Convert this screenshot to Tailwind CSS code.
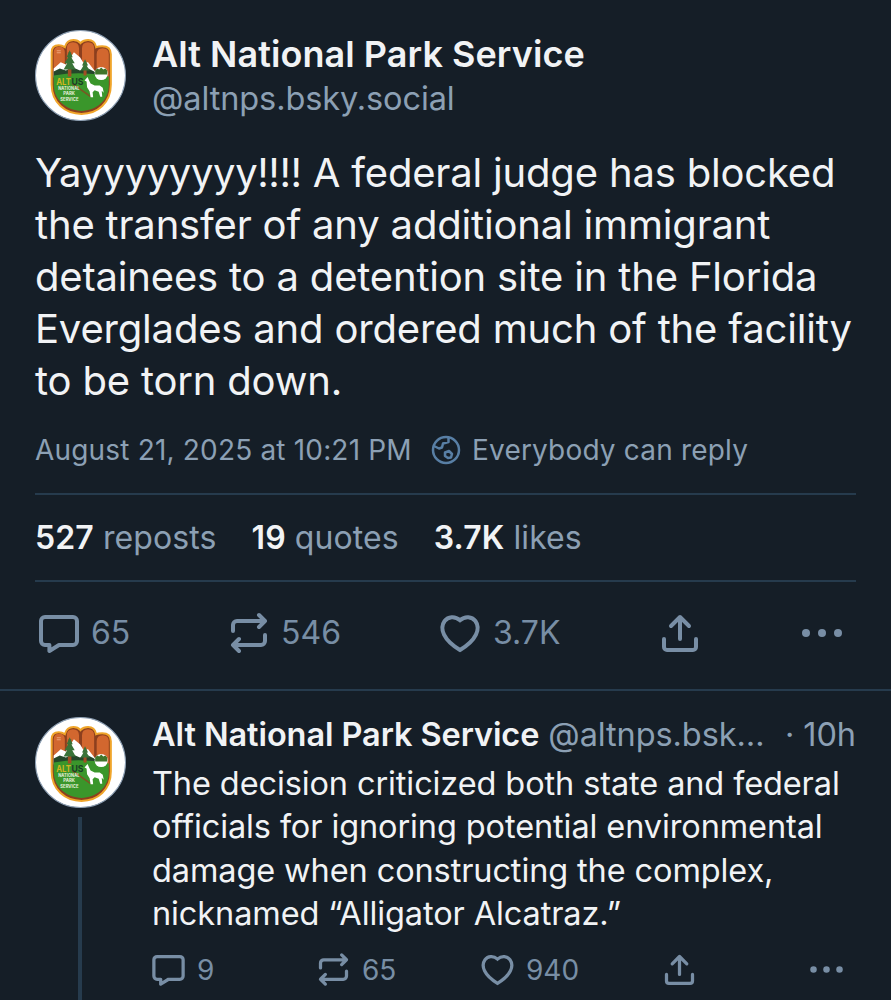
<!DOCTYPE html>
<html lang="en">

<head>
  <meta charset="UTF-8">
  <meta name="viewport" content="width=device-width, initial-scale=1.0">
  <script src="https://cdn.jsdelivr.net/npm/@tailwindcss/browser@4"></script>
  <title>Alt National Park Service</title>
</head>

<body class="bg-[#151e27] font-['Inter',sans-serif] text-[#f1f3f5]">
  <!-- shared icons -->
  <svg class="hidden">
    <symbol id="reply" viewBox="0 0 24 24">
      <path d="M5 4h14a2 2 0 0 1 2 2v10a2 2 0 0 1-2 2h-7l-4.8 3v-3H5a2 2 0 0 1-2-2V6a2 2 0 0 1 2-2Z" />
    </symbol>
    <symbol id="repost" viewBox="0 0 24 24">
      <path d="M17 3l3 3-3 3M20 6H6a2 2 0 0 0-2 2v3M7 21l-3-3 3-3M4 18h14a2 2 0 0 0 2-2v-3" />
    </symbol>
    <symbol id="like" viewBox="0 0 24 24">
      <path d="M12 5.6C14.6 3.3 18 3.8 19.7 6C22.4 9.8 20.3 15.5 12 20.5C3.7 15.5 1.6 9.8 4.3 6C6 3.8 9.4 3.3 12 5.6Z" />
    </symbol>
    <symbol id="share" viewBox="0 0 24 24">
      <path d="M12 15V4M7.5 8.5 12 4l4.5 4.5M4 15v4a1.5 1.5 0 0 0 1.5 1.5h13A1.5 1.5 0 0 0 20 19v-4" />
    </symbol>
    <symbol id="dots" viewBox="0 0 24 24">
      <g fill="currentColor" stroke="none">
        <circle cx="4" cy="12" r="2" />
        <circle cx="12" cy="12" r="2" />
        <circle cx="20" cy="12" r="2" />
      </g>
    </symbol>
    <symbol id="avatar" viewBox="0 0 90 90">
      <circle cx="45" cy="45" r="44.5" fill="#fff" stroke="#8ea0b4" />
      <path d="M16.500 54V22q0-7 7-7 3 0 6 2 2-7 8.500-7 4.500 0 7 3 3-3 7.500-3 6.500 0 8 7 2-1 6-1 8.500 0 8.500 8v30C75 72 62 83 46 83S16.500 72 16.500 54Z" fill="#8c3f1e" stroke="#f0a52a" stroke-width="2" />
      <path d="M18.500 50V22q0-5.500 5.500-5.500t5.500 5.500v28ZM31.500 50V18q0-6 6-6t6 6v32ZM46.500 50V18q0-6 6-6t6 6v32ZM61 50V24q0-6 6-6t6 6v26Z" fill="#d2672f" />
      <path d="M18.500 38l7-6 5 2 8-12 6 5 3 5 5 0 7 9v6h-41Z" fill="#fff" />
      <path d="M18.500 41l6-3 6 2 7-3 7 3 6-3 8 4 3 3v6h-43Z" fill="#24472a" />
      <path d="M18.500 45q27-5 54.500 1v9C73 70 60 80 46 80S18.500 70 18.500 54Z" fill="#3a962b" />
      <circle cx="65.500" cy="43" r="6.500" fill="#fff" />
      <path d="M59.500 40l2-2 2 1 2-2 2 2 2-1 2 2v4h-12Z" fill="#3f752b" />
      <path d="M32.500 22h3.500v24h-3.500ZM48 32h3v13h-3Z" fill="#a04e24" />
      <path d="M34.300 20l3 7-1.500 0 3.500 6-2.500 0 3.500 6h-12l3.500-6-2.500 0 3.500-6-1.500 0ZM49.500 29l3 6-1.500 0 3 5h-9l3-5-1.500 0Z" fill="#397338" />
      <path d="M37 53l18 13" stroke="#7c5523" stroke-width="1.500" />
      <!-- howling wolf -->
      <path d="M49 50l3-3.500 1.500 3.500 1.500 3 4 2h5l3 2 1 5-2-2 .5 6h-2l-1.500-5-4-1.500-2 2 .5 5h-2.500l-1-6-2.500-4-.5-5.500Z" fill="#fff" />
      <text x="21" y="54.500" font-size="9" font-weight="700" fill="#d1b51f" textLength="14.500" lengthAdjust="spacingAndGlyphs">ALT</text>
      <text x="36" y="54.500" font-size="9" font-weight="700" fill="#193f25" textLength="12" lengthAdjust="spacingAndGlyphs">US</text>
      <g fill="#e8f0df" font-size="4.800" font-weight="700">
        <text x="23" y="59.500" textLength="21" lengthAdjust="spacingAndGlyphs">NATIONAL</text>
        <text x="28" y="64.500" textLength="11.500" lengthAdjust="spacingAndGlyphs">PARK</text>
        <text x="25" y="70" textLength="18" lengthAdjust="spacingAndGlyphs">SERVICE</text>
      </g>
      <path d="M21.500 20.500h4M21.500 22.500h4" stroke="#eda27a" />
    </symbol>
  </svg>

  <main class="h-[1000px] overflow-hidden">
    <article class="h-[691px] border-b-2 border-[#263b4d] px-[35px] pt-[30px]">
      <header class="flex gap-[26px]">
        <svg class="size-[91px] shrink-0"><use href="#avatar" /></svg>
        <div class="whitespace-nowrap">
          <h1 class="mt-[2px] text-[36px] leading-[44px] font-semibold tracking-[0.05px]">Alt National Park Service</h1>
          <p class="text-[32.5px] leading-[45px] tracking-[-0.1px] text-[#8ca0b4]">@altnps.bsky.social</p>
        </div>
      </header>

      <p class="mt-[26px] text-[40px] leading-[52px] tracking-[-0.18px] whitespace-nowrap"><span class="tracking-[-0.38px]">Yayyyyyyyy!!!!</span> A federal judge has blocked<br>the transfer of any additional immigrant<br>detainees to a detention site in the Florida<br>Everglades and ordered much of the facility<br>to be torn down.</p>

      <div class="mt-[25px] flex h-[36px] items-center text-[28px] tracking-[0.18px] whitespace-nowrap text-[#8ca0b4]">
        <span class="w-[396px]">August 21, 2025 at 10:21 PM</span>
        <svg class="mr-[11px] size-[30px]" viewBox="0 0 30 30" fill="none" stroke="#587fa5" stroke-width="2.5" stroke-linejoin="round">
          <circle cx="15" cy="15" r="13" />
          <path d="M3 11l5 2.500 3-1 1-4 5.500-1.500V2.500M14 17.500l4-1.500 3 3-1 3.500-3 .5-3-2Z" />
        </svg>
        <span>Everybody can reply</span>
      </div>

      <div class="mt-[25px] flex h-[89px] items-center gap-[35px] border-y-2 border-[#263b4d] text-[32px] tracking-[0.1px] whitespace-nowrap text-[#8ca0b4]">
        <span><b class="font-semibold text-[#f1f3f5]">527</b> reposts</span>
        <span><b class="font-semibold text-[#f1f3f5]">19</b> quotes</span>
        <span><b class="font-semibold text-[#f1f3f5]">3.7K</b> likes</span>
      </div>

      <div class="mt-[27px] flex h-[48px] items-center text-[32px] text-[#788ea5]">
        <div class="flex w-[190px] items-center gap-2">
          <svg class="size-[48px]" fill="none" stroke="currentColor" stroke-width="2" stroke-linejoin="round"><use href="#reply" /></svg>65
        </div>
        <div class="flex w-[211px] items-center gap-2">
          <svg class="size-[48px]" fill="none" stroke="currentColor" stroke-width="2" stroke-linecap="round" stroke-linejoin="round"><use href="#repost" /></svg>546
        </div>
        <div class="flex w-[220px] items-center gap-[9px]">
          <svg class="size-[48px]" fill="none" stroke="currentColor" stroke-width="2"><use href="#like" /></svg>3.7K
        </div>
        <svg class="mr-[94px] size-[48px]" fill="none" stroke="currentColor" stroke-width="2" stroke-linecap="round" stroke-linejoin="round"><use href="#share" /></svg>
        <svg class="size-[48px] shrink-0"><use href="#dots" /></svg>
      </div>
    </article>

    <article class="flex h-[309px] gap-[26px] px-[35px] pt-[26px]">
      <div class="flex w-[91px] shrink-0 flex-col items-center">
        <svg class="size-[91px] shrink-0"><use href="#avatar" /></svg>
        <div class="mt-[9px] mr-[1px] w-[4px] flex-1 bg-[#263b4d]"></div>
      </div>
      <div class="w-[704px] shrink-0">
        <div class="flex h-[36px] items-center text-[32.5px] tracking-[-0.09px] whitespace-nowrap text-[#8ca0b4]">
          <b class="mr-[9px] font-semibold text-[#f1f3f5]">Alt National Park Service</b>
          <span>@altnps.bsk…</span>
          <span class="ml-auto">· 10h</span>
        </div>
        <p class="mt-[9px] text-[32.5px] leading-[43.3px] tracking-[-0.11px] whitespace-nowrap">The decision criticized both state and federal<br>officials for ignoring potential environmental<br>damage when constructing the complex,<br>nicknamed “Alligator Alcatraz.”</p>
        <div class="mt-[15px] -ml-[3px] flex h-[39px] items-center text-[28px] text-[#788ea5]">
          <div class="flex w-[165px] items-center gap-[9px]">
            <svg class="size-[39px]" fill="none" stroke="currentColor" stroke-width="2" stroke-linejoin="round"><use href="#reply" /></svg>9
          </div>
          <div class="flex w-[164px] items-center gap-[9px]">
            <svg class="size-[39px]" fill="none" stroke="currentColor" stroke-width="2" stroke-linecap="round" stroke-linejoin="round"><use href="#repost" /></svg>65
          </div>
          <div class="flex w-[182px] items-center gap-[9px]">
            <svg class="size-[39px]" fill="none" stroke="currentColor" stroke-width="2"><use href="#like" /></svg>940
          </div>
          <svg class="mr-[108px] size-[39px]" fill="none" stroke="currentColor" stroke-width="2" stroke-linecap="round" stroke-linejoin="round"><use href="#share" /></svg>
          <svg class="size-[39px] shrink-0"><use href="#dots" /></svg>
        </div>
      </div>
    </article>
  </main>
</body>

</html>
